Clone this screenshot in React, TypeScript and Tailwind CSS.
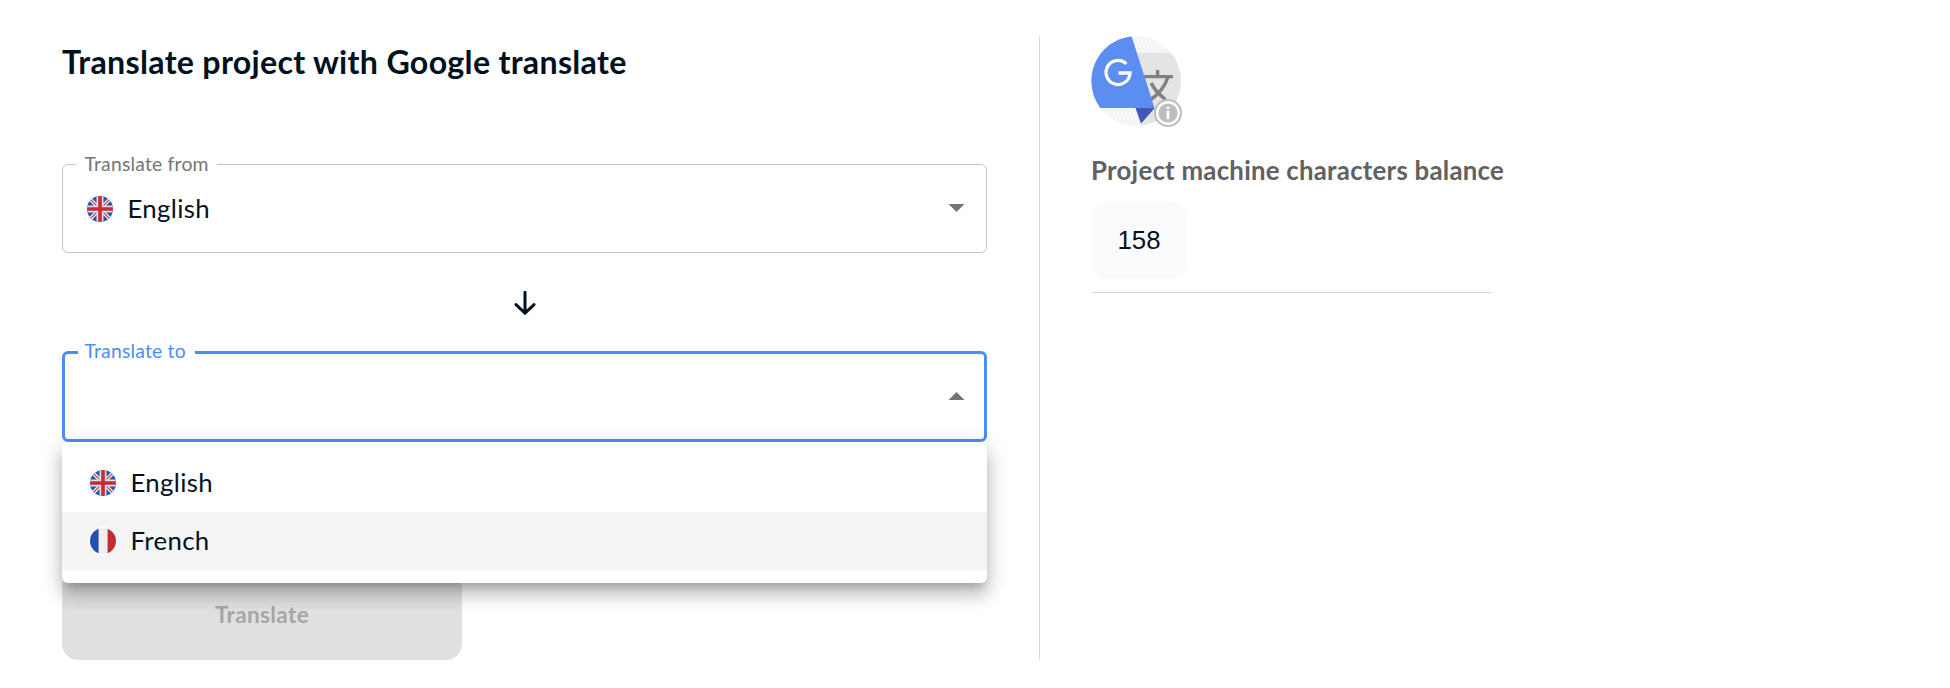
import type { ReactNode } from "react";

const UkFlag = () => (
  <svg viewBox="0 0 26 26" className="block size-full">
    <defs>
      <clipPath id="uk-circle">
        <circle cx="13" cy="13" r="13" />
      </clipPath>
    </defs>
    <g clipPath="url(#uk-circle)">
      <rect width="26" height="26" fill="#2450b0" />
      <path d="M0 0L26 26M26 0L0 26" stroke="#f0f0f4" strokeWidth="3.8" />
      <path d="M0 0L26 26M26 0L0 26" stroke="#d6414b" strokeWidth="1.3" />
      <path d="M13 0V26M0 13H26" stroke="#e0dde8" strokeWidth="7" />
      <path d="M13 0V26M0 13H26" stroke="#ca2a33" strokeWidth="3.6" />
    </g>
  </svg>
);

const FrFlag = () => (
  <svg viewBox="0 0 26 26" className="block size-full">
    <defs>
      <clipPath id="fr-circle">
        <circle cx="13" cy="13" r="13" />
      </clipPath>
    </defs>
    <g clipPath="url(#fr-circle)">
      <rect width="26" height="26" fill="#efeff0" />
      <rect width="8.6" height="26" fill="#2450b0" />
      <rect x="17.6" width="8.4" height="26" fill="#ca2a33" />
    </g>
  </svg>
);

const Flag = ({ children }: { children: ReactNode }) => (
  <span className="block size-[30px] shrink-0 rounded-full bg-[#fafbfd] p-[2px]">{children}</span>
);

const Caret = ({ up = false }: { up?: boolean }) => (
  <svg viewBox="0 0 17 9" className="h-[8.5px] w-[17px]" fill="#757575">
    <path d={up ? "M0 8.5L8.5 0L17 8.5Z" : "M0 0L8.5 8.5L17 0Z"} />
  </svg>
);

const DownArrow = () => (
  <svg
    viewBox="0 0 22 26"
    className="h-[26px] w-[22px]"
    fill="none"
    stroke="#03111f"
    strokeWidth="3"
    strokeLinecap="round"
    strokeLinejoin="round"
  >
    <path d="M11 2.2V23.2M2 14.6L11 23.2L20 14.6" />
  </svg>
);

const TranslateLogo = () => (
  <svg viewBox="0 0 91 91" className="block size-[91px]">
    <defs>
      <clipPath id="logo-circle">
        <circle cx="45.2" cy="45" r="44.8" />
      </clipPath>
      <pattern id="logo-checks" width="4" height="4" patternUnits="userSpaceOnUse">
        <rect width="4" height="4" fill="#fbfbfb" />
        <rect width="2" height="2" fill="#f0f0f0" />
        <rect x="2" y="2" width="2" height="2" fill="#f0f0f0" />
      </pattern>
    </defs>
    <g clipPath="url(#logo-circle)">
      <rect width="91" height="91" fill="url(#logo-checks)" />
      <path d="M40 17H91V91H49L63 72Z" fill="#e4e4e4" />
      <g fill="none" stroke="#808080" strokeWidth="3.4">
        <path d="M52 40.6H82M66.6 34V40.6M77 41C74 51 68 58 58 65M60.3 47C63 53.5 68 58.5 74.5 63.5" />
      </g>
      <path d="M0 0H40.5L63.5 72H0Z" fill="#5c8df0" />
      <path d="M44.5 72H63.7L50 87.7Z" fill="#4059b8" />
    </g>
    <path
      d="M35.4 27.9A12 12 0 1 0 39 37H27.5"
      fill="none"
      stroke="#fff"
      strokeWidth="3.3"
    />
  </svg>
);

const InfoBadge = () => (
  <svg viewBox="0 0 28 28" className="absolute right-0 bottom-[0.5px] block size-[28px]">
    <circle cx="14" cy="14" r="13" fill="#fff" stroke="#bdbdbd" strokeWidth="2" />
    <circle cx="14" cy="14" r="9.6" fill="#bdbdbd" />
    <path d="M14 7.8V10.3M14 12V20.2" stroke="#fff" strokeWidth="2.7" />
  </svg>
);

const Option = ({ flag, name, active = false }: { flag: ReactNode; name: string; active?: boolean }) => (
  <li className={`flex h-[58px] items-center pl-[26px] ${active ? "bg-[#f4f4f4]" : ""}`}>
    <Flag>{flag}</Flag>
    <span className="ml-[12.5px] text-[25.8px] leading-none tracking-[0.32px]">{name}</span>
  </li>
);

export default function App() {
  return (
    <main className="flex h-[688px] w-[1950px] overflow-hidden bg-white pt-[36px] pl-[62px] font-['Lato',sans-serif] text-[#03111f]">
      <section className="w-[925px]">
        <h1 className="mt-[6px] h-[40px] text-[32.2px] leading-[40px] font-bold tracking-[0.29px] whitespace-nowrap">
          Translate project with Google translate
        </h1>

        <div className="relative mt-[82px] flex h-[89px] items-center justify-between rounded-[6px] border border-[#c4c4c4] pr-[21.5px] pl-[22px]">
          <span className="absolute -top-[13px] left-[13px] bg-white px-[8.5px] text-[19.35px] leading-[24px] tracking-[0.2px] whitespace-nowrap text-[#757575]">
            Translate from
          </span>
          <div className="flex items-center">
            <Flag>
              <UkFlag />
            </Flag>
            <span className="ml-[12.5px] text-[25.8px] leading-none tracking-[0.32px]">English</span>
          </div>
          <Caret />
        </div>

        <div className="flex h-[98px] items-center justify-center pt-[1px]">
          <DownArrow />
        </div>

        <div className="relative">
          <div className="relative flex h-[91px] items-center justify-end rounded-[6px] border-[3px] border-[#4a8df8] pr-[19.5px]">
            <span className="absolute -top-[15px] left-[13px] bg-white pr-[9.5px] pl-[6.5px] text-[19.35px] leading-[24px] tracking-[0.2px] whitespace-nowrap text-[#4a8df8]">
              Translate to
            </span>
            <Caret up />
          </div>
          <ul className="absolute top-full left-0 z-10 h-[141px] w-full rounded-[6px] bg-white pt-[12px] shadow-[0_8px_8px_-5px_rgba(0,0,0,0.2),0_13px_16px_1.6px_rgba(0,0,0,0.14),0_5px_22px_3px_rgba(0,0,0,0.12)]">
            <Option flag={<UkFlag />} name="English" />
            <Option flag={<FrFlag />} name="French" active />
          </ul>
        </div>

        <button
          type="button"
          disabled
          className="mt-[128px] flex h-[90px] w-[400px] items-center justify-center rounded-[16px] bg-[#e0e0e0] text-[22.6px] font-bold tracking-[0.36px] text-[#a6a6a6]"
        >
          Translate
        </button>
      </section>

      <aside className="ml-[52px] h-[624px] border-l border-[#cfdbe2] pl-[51px]">
        <div className="relative size-[91px]">
          <TranslateLogo />
          <InfoBadge />
        </div>
        <h2 className="mt-[27px] h-[32px] text-[25.8px] leading-[32px] font-bold tracking-[0.25px] whitespace-nowrap text-[#616161]">
          Project machine characters balance
        </h2>
        <div className="mt-[16px] flex h-[77px] w-[96px] items-center justify-center rounded-[16px] bg-[#fafbfd] font-['Liberation_Sans',sans-serif] text-[25.8px]">
          158
        </div>
        <div className="mt-[13px] h-px w-[400px] bg-[#c8dfe6]" />
      </aside>
    </main>
  );
}
